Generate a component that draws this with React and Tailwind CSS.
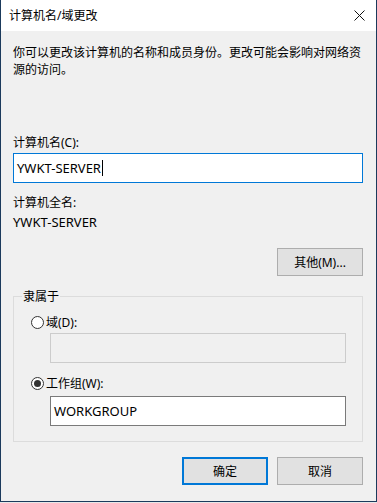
import React from 'react';

const font = { fontFamily: '"Noto Sans", "Noto Sans CJK SC", sans-serif' };

// --- Win10 style radio ---
function Radio({ checked, label }) {
    return (
        <div className="flex items-center h-[17px]">
            <span className="w-[13px] h-[13px] rounded-full border border-[#333] bg-white flex items-center justify-center shrink-0">
                {checked && <span className="w-[7px] h-[7px] rounded-full bg-[#333]" />}
            </span>
            <span className="ml-[2px] leading-[17px]">{label}</span>
        </div>
    );
}

// --- Push button ---
function Button({ children, primary }) {
    const cls = primary
        ? 'border-2 border-[#0078d7]'
        : 'border border-[#adadad]';
    return (
        <div className={`w-[86px] h-[28px] bg-[#e1e1e1] flex items-center justify-center leading-[17px] ${cls}`}>
            {children}
        </div>
    );
}

export default function App() {
    return (
        <div className="w-[377px] h-[503px] bg-[#e8e8e8]" style={font}>
            <div className="w-[377px] h-[502px] flex flex-col border-l border-r border-b border-[#1b3a5c] text-[12px] text-black">
                {/* Title bar */}
                <div className="h-[31px] bg-white flex items-center justify-between pl-[8px] pr-[10px] shrink-0">
                    <span className="leading-[17px]">计算机名/域更改</span>
                    <svg width="11" height="11" viewBox="0 0 11 11" className="mr-[1px]">
                        <path d="M0.5 0.5 L10.5 10.5 M10.5 0.5 L0.5 10.5" stroke="#111" strokeWidth="1" fill="none" />
                    </svg>
                </div>

                {/* Body */}
                <div className="flex-1 bg-[#f0f0f0] pl-[12px] pr-[13px] pt-[13px] flex flex-col">
                    <p className="leading-[17px] w-[350px]">
                        你可以更改该计算机的名称和成员身份。更改可能会影响对网络资源的访问。
                    </p>

                    <div className="mt-[56px] leading-[17px]">计算机名(C):</div>
                    <div className="mt-[2px] h-[30px] border border-[#0078d7] bg-white flex items-center pl-[3px]">
                        <span className="leading-[17px] text-[13px]">YWKT-SERVER</span>
                        <span className="inline-block w-px h-[16px] bg-black ml-[1px]" />
                    </div>

                    <div className="mt-[11px] leading-[17px]">计算机全名:</div>
                    <div className="mt-[3px] leading-[17px] text-[13px]">YWKT-SERVER</div>

                    <div className="mt-[17px] flex justify-end">
                        <Button>其他(M)...</Button>
                    </div>

                    {/* Member of group */}
                    <div className="relative mt-[20px] h-[146px] border border-[#dcdcdc] pl-[17px] pr-[16px] pt-[17px]">
                        <span className="absolute left-[8px] -top-[9px] px-[1px] bg-[#f0f0f0] leading-[17px]">隶属于</span>
                        <Radio label="域(D):" />
                        <div className="mt-[2px] ml-[19px] h-[30px] border border-[#cccccc] bg-[#f0f0f0]" />
                        <div className="mt-[12px]">
                            <Radio checked label="工作组(W):" />
                        </div>
                        <div className="mt-[4px] ml-[19px] h-[30px] border border-[#7a7a7a] bg-white flex items-center pl-[3px]">
                            <span className="leading-[17px] text-[13px]">WORKGROUP</span>
                        </div>
                    </div>

                    <div className="mt-[15px] flex justify-end gap-[9px]">
                        <Button primary>确定</Button>
                        <Button>取消</Button>
                    </div>
                </div>
            </div>
        </div>
    );
}
